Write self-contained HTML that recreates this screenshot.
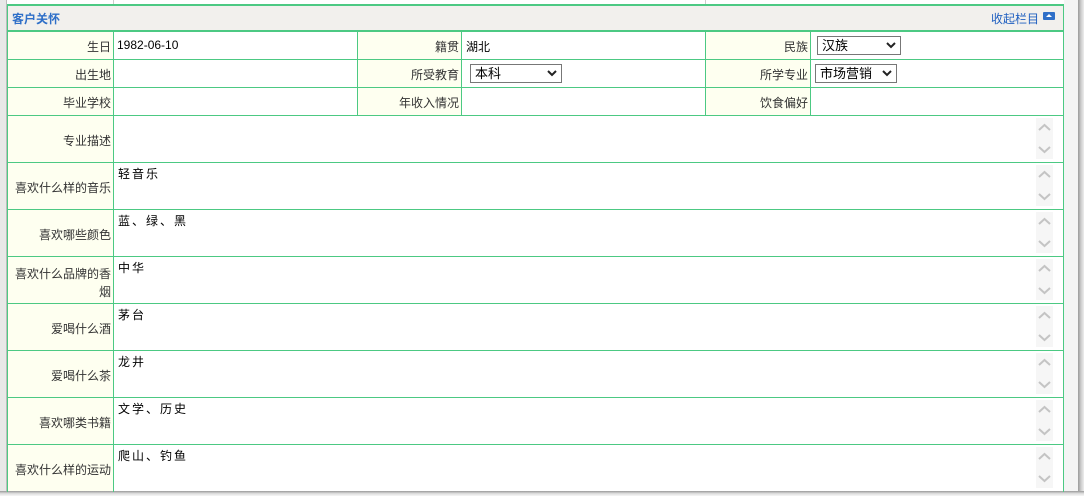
<!DOCTYPE html>
<html><head><meta charset="utf-8"><style>
*{margin:0;padding:0;box-sizing:border-box}
body{width:1089px;height:501px;background:#fff;position:relative;overflow:hidden;font-family:"Liberation Sans","Noto Sans CJK SC",sans-serif;font-size:12px;color:#333}
.a{position:absolute}
.hl{position:absolute;height:1px;background:#4cc983}
.vl{position:absolute;width:1px;background:#4cc983}
.lab{position:absolute;background:#fefff0;text-align:right;padding-right:6px;color:#333}
.val{position:absolute;color:#000;padding-left:4px}
.sel{position:absolute;border:1px solid #777;background:#fff;height:19px;font-size:13px;color:#000;padding-left:4px;line-height:17px}
.sel svg{position:absolute;right:4px;top:5px}
.sb{position:absolute;left:1036px;width:17px;background:#f6f6f6}
</style></head><body>
<div class="a" style="left:0;top:0;width:7px;height:492px;background:#e8e8e8"></div>
<div class="a" style="left:6px;top:0;width:1px;height:492px;background:#bbb"></div>
<div class="a" style="left:113px;top:0;width:1px;height:4px;background:#ccc"></div>
<div class="a" style="left:705px;top:0;width:1px;height:4px;background:#ccc"></div>
<div class="a" style="left:1064px;top:0;width:14px;height:492px;background:#f4f4f4"></div>
<div class="a" style="left:1078px;top:0;width:6px;height:496px;background:linear-gradient(90deg,#999,#ccc,#eee)"></div>
<div class="a" style="left:0;top:491px;width:1084px;height:5px;background:linear-gradient(#999,#ddd,#f6f6f6)"></div>
<!-- header -->
<div class="a" style="left:7px;top:4px;width:1057px;height:27px;background:#f2f0ed"></div>
<div class="hl" style="left:7px;top:4px;width:1057px;height:2px"></div>
<div class="hl" style="left:7px;top:30px;width:1057px;height:2px"></div>
<div class="a" style="left:12px;top:10px;color:#2f6fc8;font-weight:bold;font-size:12px">客户关怀</div>
<div class="a" style="left:991px;top:10px;color:#1f5fc0;font-size:12px">收起栏目</div>
<div class="a" style="left:1043px;top:12px;width:12px;height:8px;background:#2f6fc8;border-radius:1px"><div style="position:absolute;left:3px;top:2px;border-left:3px solid transparent;border-right:3px solid transparent;border-bottom:3px solid #fff"></div></div>
<!-- label columns bg -->
<div class="lab" style="left:7px;top:32px;width:106px;height:459px"></div>
<div class="lab" style="left:357px;top:32px;width:104px;height:83px"></div>
<div class="lab" style="left:705px;top:32px;width:105px;height:83px"></div>
<!-- grid lines -->
<div class="vl" style="left:7px;top:4px;height:488px"></div>
<div class="vl" style="left:1063px;top:4px;height:488px"></div>
<div class="vl" style="left:113px;top:32px;height:460px"></div>
<div class="vl" style="left:357px;top:32px;height:83px"></div>
<div class="vl" style="left:461px;top:32px;height:83px"></div>
<div class="vl" style="left:705px;top:32px;height:83px"></div>
<div class="vl" style="left:810px;top:32px;height:83px"></div>
<div class="hl" style="left:7px;top:59px;width:1057px"></div>
<div class="hl" style="left:7px;top:87px;width:1057px"></div>
<div class="hl" style="left:7px;top:115px;width:1057px"></div>
<div class="hl" style="left:7px;top:162px;width:1057px"></div>
<div class="hl" style="left:7px;top:209px;width:1057px"></div>
<div class="hl" style="left:7px;top:256px;width:1057px"></div>
<div class="hl" style="left:7px;top:303px;width:1057px"></div>
<div class="hl" style="left:7px;top:350px;width:1057px"></div>
<div class="hl" style="left:7px;top:397px;width:1057px"></div>
<div class="hl" style="left:7px;top:444px;width:1057px"></div>
<!-- row labels -->
<div class="a" style="left:7px;width:104px;text-align:right;top:38px">生日</div>
<div class="a" style="left:7px;width:104px;text-align:right;top:66px">出生地</div>
<div class="a" style="left:7px;width:104px;text-align:right;top:94px">毕业学校</div>
<div class="a" style="left:357px;width:102px;text-align:right;top:38px">籍贯</div>
<div class="a" style="left:357px;width:102px;text-align:right;top:66px">所受教育</div>
<div class="a" style="left:357px;width:102px;text-align:right;top:94px">年收入情况</div>
<div class="a" style="left:705px;width:103px;text-align:right;top:38px">民族</div>
<div class="a" style="left:705px;width:103px;text-align:right;top:66px">所学专业</div>
<div class="a" style="left:705px;width:103px;text-align:right;top:94px">饮食偏好</div>
<div class="a" style="left:117px;top:38px;color:#000">1982-06-10</div>
<div class="a" style="left:466px;top:38px;color:#000">湖北</div>
<div class="sel" style="left:817px;top:36px;width:84px">汉族<svg width="10" height="7"><path d="M1 1L5 5L9 1" stroke="#222" stroke-width="2" fill="none"/></svg></div>
<div class="sel" style="left:470px;top:64px;width:92px">本科<svg width="10" height="7"><path d="M1 1L5 5L9 1" stroke="#222" stroke-width="2" fill="none"/></svg></div>
<div class="sel" style="left:815px;top:64px;width:82px">市场营销<svg width="10" height="7"><path d="M1 1L5 5L9 1" stroke="#222" stroke-width="2" fill="none"/></svg></div>
<!-- textarea rows -->
<div class="a" style="left:7px;width:104px;text-align:right;top:132px">专业描述</div>
<div class="a" style="left:7px;width:104px;text-align:right;top:179px">喜欢什么样的音乐</div>
<div class="a" style="left:7px;width:104px;text-align:right;top:226px">喜欢哪些颜色</div>
<div class="a" style="left:7px;width:104px;text-align:right;top:265px;line-height:18px">喜欢什么品牌的香<br>烟</div>
<div class="a" style="left:7px;width:104px;text-align:right;top:320px">爱喝什么酒</div>
<div class="a" style="left:7px;width:104px;text-align:right;top:367px">爱喝什么茶</div>
<div class="a" style="left:7px;width:104px;text-align:right;top:414px">喜欢哪类书籍</div>
<div class="a" style="left:7px;width:104px;text-align:right;top:461px">喜欢什么样的运动</div>
<div class="a" style="left:118px;top:165px;color:#000;letter-spacing:2px">轻音乐</div>
<div class="a" style="left:118px;top:212px;color:#000;letter-spacing:2px">蓝、绿、黑</div>
<div class="a" style="left:118px;top:259px;color:#000;letter-spacing:2px">中华</div>
<div class="a" style="left:118px;top:306px;color:#000;letter-spacing:2px">茅台</div>
<div class="a" style="left:118px;top:353px;color:#000;letter-spacing:2px">龙井</div>
<div class="a" style="left:118px;top:400px;color:#000;letter-spacing:2px">文学、历史</div>
<div class="a" style="left:118px;top:447px;color:#000;letter-spacing:2px">爬山、钓鱼</div>
<!-- scrollbars -->
<div class="sb" style="top:118px;height:41px"><svg width="17" height="41"><path d="M3 12L8.5 7L14 12M3 29L8.5 34L14 29" stroke="#c4c4c4" stroke-width="2" fill="none"/></svg></div>
<div class="sb" style="top:165px;height:41px"><svg width="17" height="41"><path d="M3 12L8.5 7L14 12M3 29L8.5 34L14 29" stroke="#c4c4c4" stroke-width="2" fill="none"/></svg></div>
<div class="sb" style="top:212px;height:41px"><svg width="17" height="41"><path d="M3 12L8.5 7L14 12M3 29L8.5 34L14 29" stroke="#c4c4c4" stroke-width="2" fill="none"/></svg></div>
<div class="sb" style="top:259px;height:41px"><svg width="17" height="41"><path d="M3 12L8.5 7L14 12M3 29L8.5 34L14 29" stroke="#c4c4c4" stroke-width="2" fill="none"/></svg></div>
<div class="sb" style="top:306px;height:41px"><svg width="17" height="41"><path d="M3 12L8.5 7L14 12M3 29L8.5 34L14 29" stroke="#c4c4c4" stroke-width="2" fill="none"/></svg></div>
<div class="sb" style="top:353px;height:41px"><svg width="17" height="41"><path d="M3 12L8.5 7L14 12M3 29L8.5 34L14 29" stroke="#c4c4c4" stroke-width="2" fill="none"/></svg></div>
<div class="sb" style="top:400px;height:41px"><svg width="17" height="41"><path d="M3 12L8.5 7L14 12M3 29L8.5 34L14 29" stroke="#c4c4c4" stroke-width="2" fill="none"/></svg></div>
<div class="sb" style="top:447px;height:41px"><svg width="17" height="41"><path d="M3 12L8.5 7L14 12M3 29L8.5 34L14 29" stroke="#c4c4c4" stroke-width="2" fill="none"/></svg></div>
</body></html>
